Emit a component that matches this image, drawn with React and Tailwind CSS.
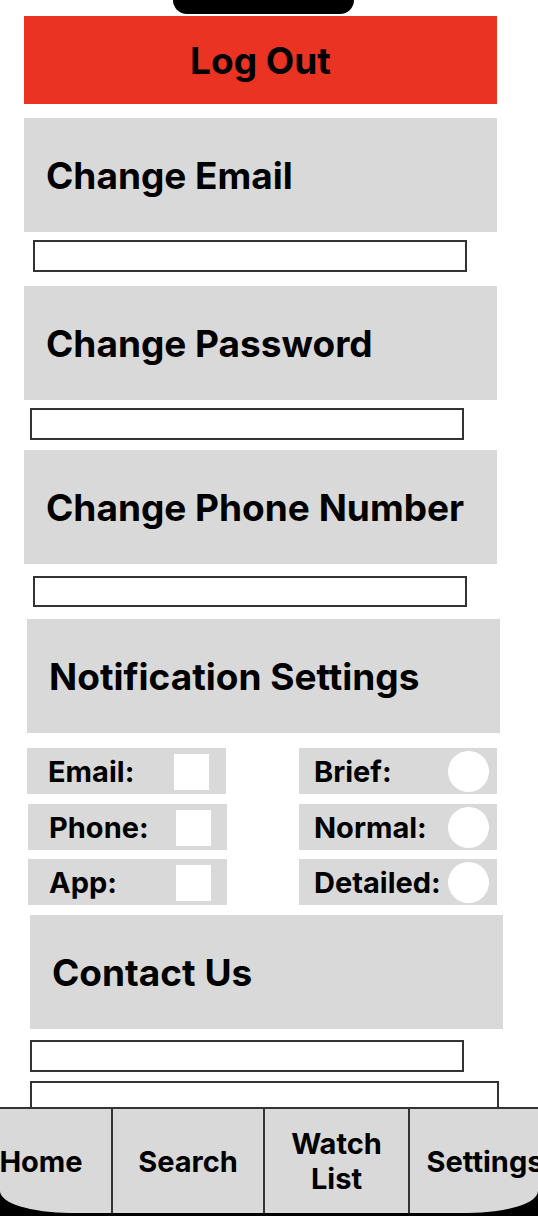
import React from 'react';

const Section = ({ label, className = '' }) => (
  <div className={`h-[114px] w-[473px] bg-[#d9d9d9] flex items-center pl-[22px] ${className}`}>
    <span className="text-[37px] font-bold text-black leading-none whitespace-nowrap">{label}</span>
  </div>
);

const Field = ({ className = '' }) => (
  <div className={`border-2 border-[#333] bg-white ${className}`} />
);

const CheckRow = ({ label, className = '', boxLeft }) => (
  <div className={`h-[46px] w-[199px] bg-[#d9d9d9] flex items-center relative ${className}`}>
    <span className="pl-[21px] text-[29px] font-bold leading-none">{label}</span>
    <div className={`absolute top-[6px] h-[36px] w-[35px] bg-white ${boxLeft}`} />
  </div>
);

const RadioRow = ({ label, className = '' }) => (
  <div className={`h-[46px] w-[198px] bg-[#d9d9d9] flex items-center relative ${className}`}>
    <span className="pl-[15px] text-[29px] font-bold leading-none whitespace-nowrap">{label}</span>
    <div className="absolute right-[8px] top-[3px] h-[41px] w-[41px] rounded-full bg-white" />
  </div>
);

const tabs = [
  { label: 'Home', w: 'w-[142px]' },
  { label: 'Search', w: 'w-[152px]' },
  { label: 'Watch List', w: 'w-[145px]', split: true },
  { label: 'Settings', w: 'w-[150px]' },
];

export default function App() {
  return (
    <div className="w-[538px] h-[1216px] bg-white overflow-hidden flex flex-col text-black" style={{ fontFamily: 'Inter, "Liberation Sans", sans-serif' }}>
      {/* notch */}
      <div className="ml-[173px] h-[14px] w-[181px] bg-black rounded-b-[16px]" />

      <div className="mt-[2px] ml-[24px] h-[88px] w-[473px] bg-[#ea3323] flex items-center justify-center">
        <span className="text-[37px] font-bold leading-none">Log Out</span>
      </div>

      <Section label="Change Email" className="mt-[14px] ml-[24px]" />
      <Field className="mt-[8px] ml-[33px] h-[32px] w-[434px]" />

      <Section label="Change Password" className="mt-[14px] ml-[24px]" />
      <Field className="mt-[8px] ml-[30px] h-[32px] w-[434px]" />

      <Section label="Change Phone Number" className="mt-[10px] ml-[24px]" />
      <Field className="mt-[12px] ml-[33px] h-[31px] w-[434px]" />

      <Section label="Notification Settings" className="mt-[12px] ml-[27px]" />

      <div className="mt-[15px] flex flex-col">
        <div className="flex">
          <CheckRow label="Email:" className="ml-[27px] w-[198px]" boxLeft="left-[147px]" />
          <RadioRow label="Brief:" className="ml-[73px]" />
        </div>
        <div className="flex mt-[10px]">
          <CheckRow label="Phone:" className="ml-[28px]" boxLeft="left-[148px]" />
          <RadioRow label="Normal:" className="ml-[72px]" />
        </div>
        <div className="flex mt-[9px]">
          <CheckRow label="App:" className="ml-[28px]" boxLeft="left-[148px]" />
          <RadioRow label="Detailed:" className="ml-[72px]" />
        </div>
      </div>

      <Section label="Contact Us" className="mt-[10px] ml-[30px]" />
      <Field className="mt-[11px] ml-[30px] h-[32px] w-[434px]" />
      <Field className="mt-[9px] ml-[30px] h-[26px] w-[469px] border-b-0" />

      {/* bottom nav */}
      <div className="h-[109px] bg-black">
        <div className="h-[106px] bg-[#d9d9d9] border-t-2 border-[#333] rounded-bl-[70px_22px] rounded-br-[70px_22px] overflow-hidden">
          <div className="flex h-full -ml-[29px]">
            {tabs.map((t, i) => (
              <div
                key={t.label}
                className={`${t.w} shrink-0 h-full flex items-center justify-center text-center ${i < 3 ? 'border-r-2 border-[#333]' : ''}`}
              >
                <span className="text-[29px] font-bold leading-[35px] whitespace-nowrap">
                  {t.split ? (<>Watch<br />List</>) : t.label}
                </span>
              </div>
            ))}
          </div>
        </div>
      </div>
    </div>
  );
}
